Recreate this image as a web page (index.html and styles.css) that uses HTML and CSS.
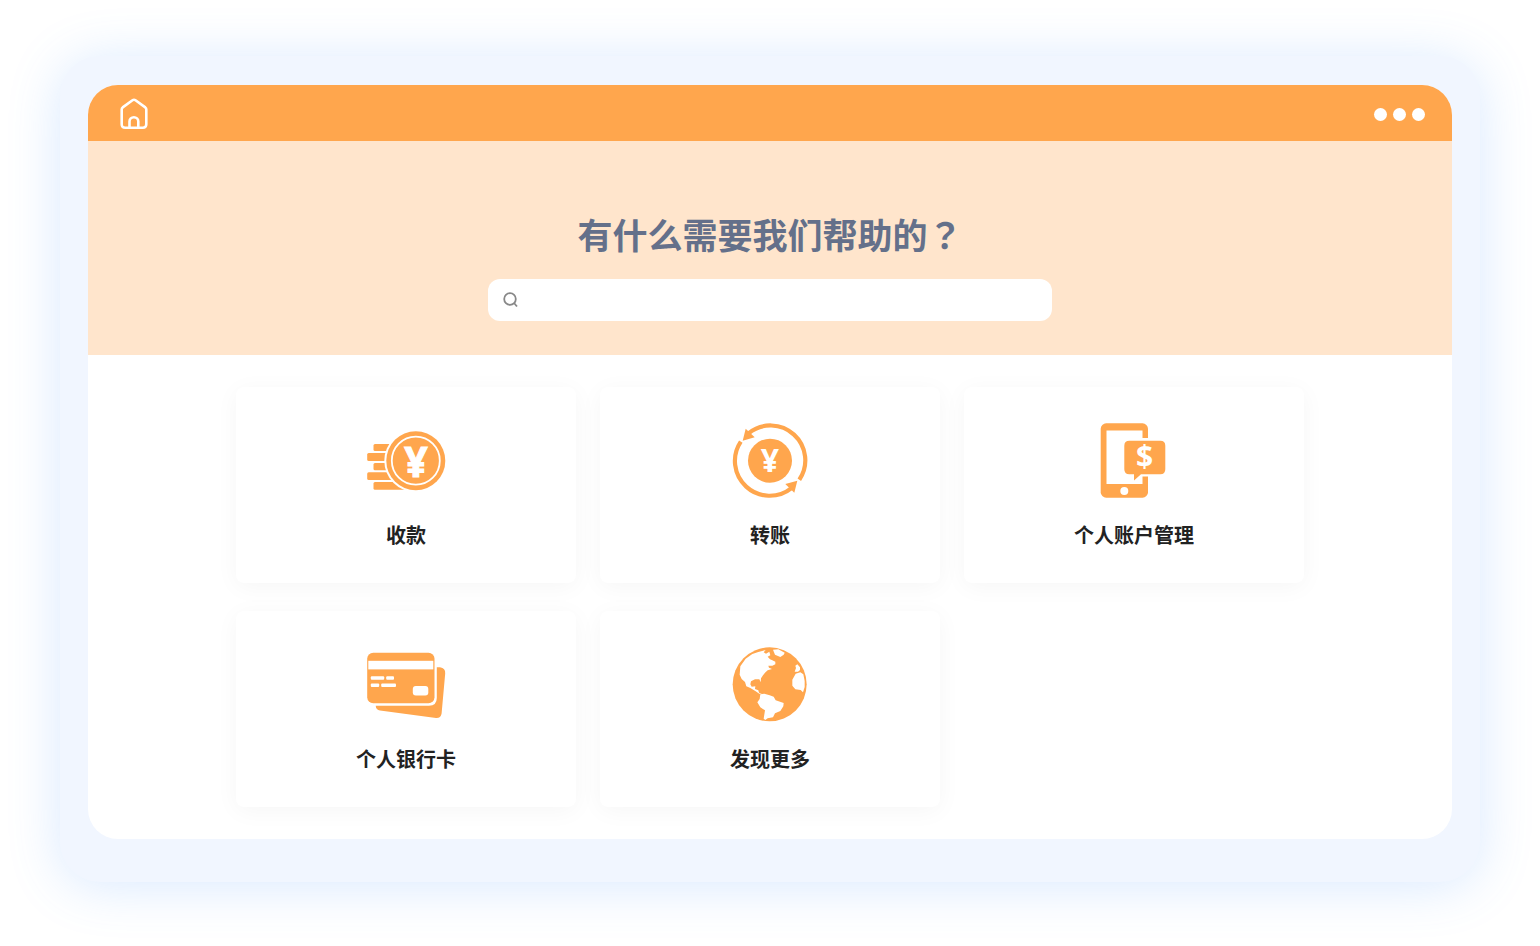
FILE: index.html
```html
<!DOCTYPE html>
<html lang="zh-CN">
<head>
    <meta charset="UTF-8">
    <meta name="viewport" content="width=device-width, initial-scale=1.0">
    <title>帮助中心</title>
    <link rel="stylesheet" href="styles.css">
</head>
<body>
    <div class="frame">
        <div class="window">
            <header class="topbar">
                <a class="home" href="#" aria-label="首页">
                    <svg width="28" height="32" viewBox="0 0 28 32">
                        <path d="M1.7 11.4Q1.7 10.2 2.7 9.4L12.5 2.3Q14 1.2 15.5 2.3L25.3 9.4Q26.3 10.2 26.3 11.4V26.2Q26.3 29.7 22.8 29.7H5.2Q1.7 29.7 1.7 26.2Z"/>
                        <path d="M9.5 29.5V23.6A4.4 4.4 0 0 1 18.3 23.6V29.5"/>
                    </svg>
                </a>
                <button class="more" type="button" aria-label="更多">
                    <span></span><span></span><span></span>
                </button>
            </header>

            <section class="hero">
                <h1>有什么需要我们帮助的<span class="mark" lang="zh-TW">？</span></h1>
                <form class="search">
                    <svg width="16" height="16" viewBox="0 0 16 16">
                        <circle cx="8" cy="7" r="5.8"/>
                        <path d="M12 11L15 14.5"/>
                    </svg>
                    <input type="search" aria-label="搜索">
                </form>
            </section>

            <main class="cards">
                <a class="card" href="#">
                    <svg class="icon" viewBox="0 0 80 80">
                        <rect x="7.5" y="23" width="30" height="7" rx="1.5"/>
                        <rect x="1.2" y="32" width="30" height="8" rx="1.5"/>
                        <rect x="7.5" y="42" width="30" height="7.3" rx="1.5"/>
                        <rect x="1.2" y="51.3" width="35" height="7.7" rx="1.5"/>
                        <rect x="7.5" y="61" width="36" height="7.7" rx="1.5"/>
                        <circle class="white" cx="49.8" cy="39.7" r="31.5"/>
                        <circle cx="49.8" cy="39.7" r="29.5"/>
                        <circle class="ring" cx="49.8" cy="39.7" r="24"/>
                        <text class="yen-large" x="50" y="56">¥</text>
                    </svg>
                    <span>收款</span>
                </a>

                <a class="card" href="#">
                    <svg class="icon" viewBox="0 0 80 80">
                        <circle cx="40" cy="39.7" r="22"/>
                        <path class="arc" d="M18.5 12.3A34.8 34.8 0 0 1 69.3 58.8"/>
                        <path class="arc" d="M10.8 20.6A34.8 34.8 0 0 0 61.5 67.1"/>
                        <path d="M12.7 19.7L15.7 7.7L24.7 16.3Z"/>
                        <path d="M67.3 59.7L64.3 71.7L55.3 63Z"/>
                        <text class="yen" x="40" y="51">¥</text>
                    </svg>
                    <span>转账</span>
                </a>

                <a class="card" href="#">
                    <svg class="icon" viewBox="0 0 80 80">
                        <rect x="6.7" y="2.3" width="47.3" height="74.4" rx="5.5"/>
                        <rect class="white" x="12.5" y="9.5" width="36" height="53.5"/>
                        <circle class="white" cx="30.3" cy="70" r="4"/>
                        <rect class="white" x="28" y="17" width="46" height="38.5" rx="5"/>
                        <path d="M35.3 19.7H66.3Q71.3 19.7 71.3 24.7V48.3Q71.3 53.3 66.3 53.3H47L40 59.5V53.3H35.3Q30.3 53.3 30.3 48.3V24.7Q30.3 19.7 35.3 19.7Z"/>
                        <text class="dollar" x="50.7" y="46">$</text>
                    </svg>
                    <span>个人账户管理</span>
                </a>

                <a class="card" href="#">
                    <svg class="icon" viewBox="0 0 80 80">
                        <rect x="1.2" y="7.7" width="67.3" height="50.6" rx="6"/>
                        <rect class="white" x="2.3" y="15.8" width="65" height="8.6"/>
                        <rect class="white" x="4.8" y="31.3" width="13.4" height="3.4" rx="1"/>
                        <rect class="white" x="20.2" y="31.3" width="7.8" height="3.4" rx="1"/>
                        <rect class="white" x="4.8" y="38.5" width="8.4" height="3.4" rx="1"/>
                        <rect class="white" x="15.2" y="38.5" width="14.8" height="3.4" rx="1"/>
                        <rect class="white" x="46.8" y="41" width="15.5" height="9.5" rx="3"/>
                        <path d="M70.8 22.3H74Q79.6 23 79.2 28.5L75.6 68.5Q74.8 73.3 70 73L14 65.5Q10 65 9.7 60.7H63Q70.8 60.7 70.8 53Z"/>
                    </svg>
                    <span>个人银行卡</span>
                </a>

                <a class="card" href="#">
                    <svg class="icon" viewBox="45 15 240 240">
                        <circle cx="164" cy="133" r="111"/>
                        <path class="white" d="M76 79L92 56L112 42L130 36L152 30L146 37L153 41L163 35L166 46L158 50L165 58L172 61L181 65L181 73L172 77L160 77L162 83L171 87L158 91L150 98L144 106L138 115L137 127L133 118L120 118L108 124L106 133L110 140L121 139L120 147L130 151L132 158L141 161L133 161L122 154L106 144L94 139L90 126L80 117L74 104Z"/>
                        <path class="white" d="M136 163L148 161L164 166L176 170L182 181L206 189L205 199L196 213L180 220L174 232L158 235L151 240L146 236L150 211L136 202L127 187L134 177Z"/>
                        <path class="white" d="M174 29L190 28L209 38L206 44L196 51L180 44Z"/>
                        <path class="white" d="M247 73L255 82L255 90L249 95L239 95L243 84L241 77Z"/>
                        <path class="white" d="M242 101L256 97L265 103L269 123L269 141L264 157L257 150L241 148L232 137L232 119Z"/>
                    </svg>
                    <span>发现更多</span>
                </a>
            </main>
        </div>
    </div>
</body>
</html>
```

FILE: styles.css
```css
* {
    box-sizing: border-box;
}

body {
    margin: 0;
    padding: 56px 60px 64px;
    background-color: #fff;
    color: #222;
    font-family: "Noto Sans CJK SC", sans-serif;
}

.frame {
    padding: 29px 28px 43px;
    border-radius: 40px;
    background-color: #f1f6ff;
    box-shadow: 0 4px 52px rgba(80, 155, 255, 0.22);
}

.window {
    overflow: hidden;
    border-radius: 30px;
    background-color: #fff;
}

.topbar {
    display: flex;
    align-items: center;
    justify-content: space-between;
    height: 56px;
    padding: 2px 27px 0 32px;
    background-color: #ffa64d;
}

.home svg {
    display: block;
    fill: none;
    stroke: #fff;
    stroke-width: 2.6;
}

.more {
    display: flex;
    gap: 6px;
    padding: 0;
    border: none;
    background: none;
    cursor: pointer;
}

    .more span {
        width: 13px;
        height: 13px;
        border-radius: 50%;
        background-color: #fff;
    }

.hero {
    padding: 68px 24px 34px;
    background-color: #ffe5cc;
}

    .hero h1 {
        margin: 0 0 20px;
        color: #64708a;
        font-size: 35px;
        font-weight: 700;
        line-height: 50px;
        text-align: center;
    }

    /* full-width question mark centred in its box */
    .hero .mark {
        font-family: "Noto Sans CJK TC", sans-serif;
    }

.search {
    display: flex;
    align-items: center;
    gap: 10px;
    max-width: 564px;
    height: 42px;
    margin: 0 auto;
    padding: 0 14px;
    border-radius: 12px;
    background-color: #fff;
}

    .search svg {
        flex: none;
        fill: none;
        stroke: #888;
        stroke-width: 1.8;
    }

    .search input {
        flex: 1;
        min-width: 0;
        height: 100%;
        padding: 0;
        border: none;
        outline: none;
        background: none;
        font: inherit;
        font-size: 16px;
    }

.cards {
    display: grid;
    grid-template-columns: repeat(3, 1fr);
    gap: 28px 24px;
    max-width: 1068px;
    margin: 0 auto;
    padding: 32px 0;
}

.card {
    display: flex;
    flex-direction: column;
    align-items: center;
    gap: 20px;
    padding: 34px 16px;
    border-radius: 8px;
    background-color: #fff;
    box-shadow: 0 4px 24px rgba(0, 0, 0, 0.04);
    color: #222;
    font-size: 20px;
    font-weight: 700;
    line-height: 28px;
    text-decoration: none;
}

.icon {
    width: 80px;
    height: 80px;
    fill: #ffa64d;
}

    .icon .white {
        fill: #fff;
    }

    .icon .ring {
        fill: none;
        stroke: #fff;
        stroke-width: 1.8;
    }

    .icon .arc {
        fill: none;
        stroke: #ffa64d;
        stroke-width: 4.2;
    }

    .icon text {
        fill: #fff;
        font-family: "Noto Sans", sans-serif;
        font-weight: 700;
        text-anchor: middle;
    }

    .icon .yen-large {
        font-size: 41px;
        stroke: #fff;
        stroke-width: 1;
    }

    .icon .yen {
        font-size: 32px;
    }

    .icon .dollar {
        font-size: 30px;
    }
```
